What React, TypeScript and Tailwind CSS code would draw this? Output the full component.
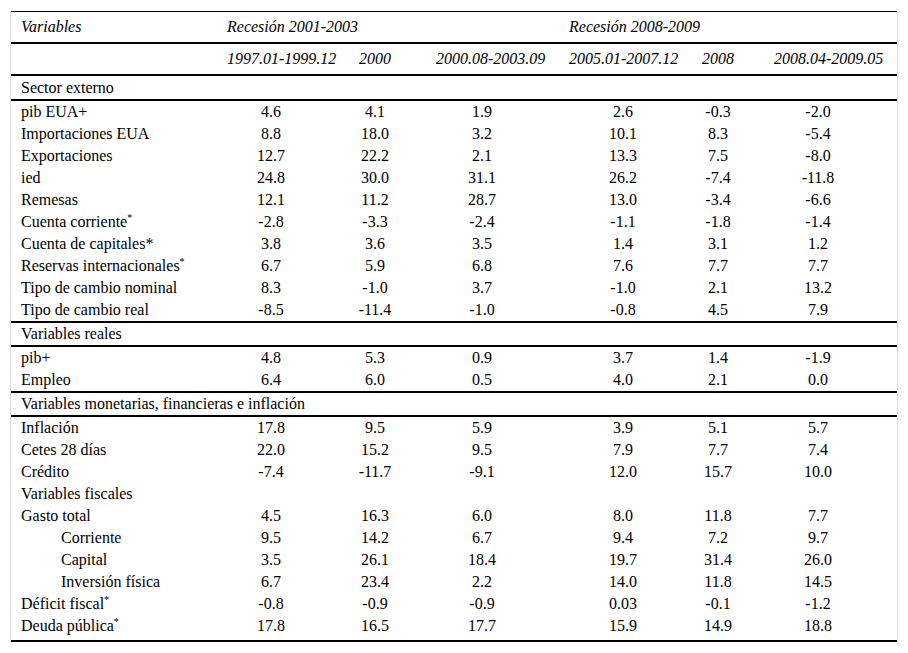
import React from "react";

type Row = {
  label: string;
  sup?: boolean;
  star?: boolean;
  indent?: boolean;
  values?: string[];
};

const GRID = "grid grid-cols-[182px_156px_52px_162px_120px_70px_130px]";

const sectorExterno: Row[] = [
  { label: "pib EUA+", values: ["4.6", "4.1", "1.9", "2.6", "-0.3", "-2.0"] },
  { label: "Importaciones EUA", values: ["8.8", "18.0", "3.2", "10.1", "8.3", "-5.4"] },
  { label: "Exportaciones", values: ["12.7", "22.2", "2.1", "13.3", "7.5", "-8.0"] },
  { label: "ied", values: ["24.8", "30.0", "31.1", "26.2", "-7.4", "-11.8"] },
  { label: "Remesas", values: ["12.1", "11.2", "28.7", "13.0", "-3.4", "-6.6"] },
  { label: "Cuenta corriente", sup: true, values: ["-2.8", "-3.3", "-2.4", "-1.1", "-1.8", "-1.4"] },
  { label: "Cuenta de capitales", star: true, values: ["3.8", "3.6", "3.5", "1.4", "3.1", "1.2"] },
  { label: "Reservas internacionales", sup: true, values: ["6.7", "5.9", "6.8", "7.6", "7.7", "7.7"] },
  { label: "Tipo de cambio nominal", values: ["8.3", "-1.0", "3.7", "-1.0", "2.1", "13.2"] },
  { label: "Tipo de cambio real", values: ["-8.5", "-11.4", "-1.0", "-0.8", "4.5", "7.9"] },
];

const reales: Row[] = [
  { label: "pib+", values: ["4.8", "5.3", "0.9", "3.7", "1.4", "-1.9"] },
  { label: "Empleo", values: ["6.4", "6.0", "0.5", "4.0", "2.1", "0.0"] },
];

const monetarias: Row[] = [
  { label: "Inflación", values: ["17.8", "9.5", "5.9", "3.9", "5.1", "5.7"] },
  { label: "Cetes 28 días", values: ["22.0", "15.2", "9.5", "7.9", "7.7", "7.4"] },
  { label: "Crédito", values: ["-7.4", "-11.7", "-9.1", "12.0", "15.7", "10.0"] },
  { label: "Variables fiscales" },
  { label: "Gasto total", values: ["4.5", "16.3", "6.0", "8.0", "11.8", "7.7"] },
  { label: "Corriente", indent: true, values: ["9.5", "14.2", "6.7", "9.4", "7.2", "9.7"] },
  { label: "Capital", indent: true, values: ["3.5", "26.1", "18.4", "19.7", "31.4", "26.0"] },
  { label: "Inversión física", indent: true, values: ["6.7", "23.4", "2.2", "14.0", "11.8", "14.5"] },
  { label: "Déficit fiscal", sup: true, values: ["-0.8", "-0.9", "-0.9", "0.03", "-0.1", "-1.2"] },
  { label: "Deuda pública", sup: true, values: ["17.8", "16.5", "17.7", "15.9", "14.9", "18.8"] },
];

function DataRow({ row }: { row: Row }) {
  return (
    <div className={`${GRID} h-[22px] items-center`}>
      <div className={`whitespace-nowrap ${row.indent ? "pl-[50px]" : "pl-[10px]"}`}>
        {row.label}
        {row.star && "*"}
        {row.sup && (
          <span className="relative -top-[6px] text-[10px] leading-none">*</span>
        )}
      </div>
      {row.values
        ? row.values.map((v, i) => (
            <div key={i} className="text-center whitespace-nowrap">
              {v}
            </div>
          ))
        : null}
    </div>
  );
}

function SectionRow({ label, h = "h-[22px]" }: { label: string; h?: string }) {
  return (
    <div className={`${h} flex items-center pl-[10px] whitespace-nowrap`}>{label}</div>
  );
}

export default function App() {
  return (
    <div className="w-[908px] h-[653px] bg-white pt-[11px] pl-[10px]">
      <div
        className="w-[888px] border-l border-r border-[#dcdcdc] text-black text-[16px] leading-none"
        style={{ fontFamily: '"Liberation Serif", "Times New Roman", serif' }}
      >
        <div className="border-t border-black">
          <div className={`${GRID} h-[32px] items-center italic border-b-2 border-black`}>
            <div className="pl-[10px]">Variables</div>
            <div className="pl-[34px] whitespace-nowrap">Recesión 2001-2003</div>
            <div />
            <div />
            <div className="pl-[6px] whitespace-nowrap">Recesión 2008-2009</div>
            <div />
            <div />
          </div>
          <div className={`${GRID} h-[32px] items-center italic border-b-2 border-black`}>
            <div />
            <div className="pl-[34px] whitespace-nowrap">1997.01-1999.12</div>
            <div className="pl-[10px] whitespace-nowrap">2000</div>
            <div className="pl-[35px] whitespace-nowrap">2000.08-2003.09</div>
            <div className="pl-[6px] whitespace-nowrap">2005.01-2007.12</div>
            <div className="pl-[19px] whitespace-nowrap">2008</div>
            <div className="pl-[21px] whitespace-nowrap">2008.04-2009.05</div>
          </div>
          <div className="border-b-2 border-black">
            <SectionRow label="Sector externo" h="h-[23px]" />
          </div>
          <div className="border-b-2 border-black">
            {sectorExterno.map((r) => (
              <DataRow key={r.label} row={r} />
            ))}
          </div>
          <div className="border-b-2 border-black">
            <SectionRow label="Variables reales" />
          </div>
          <div className="border-b-2 border-black">
            {reales.map((r) => (
              <DataRow key={r.label} row={r} />
            ))}
          </div>
          <div className="border-b-2 border-black">
            <SectionRow label="Variables monetarias, financieras e inflación" />
          </div>
          <div className="border-b-2 border-black pb-[3px]">
            {monetarias.map((r) => (
              <DataRow key={r.label} row={r} />
            ))}
          </div>
        </div>
      </div>
    </div>
  );
}
